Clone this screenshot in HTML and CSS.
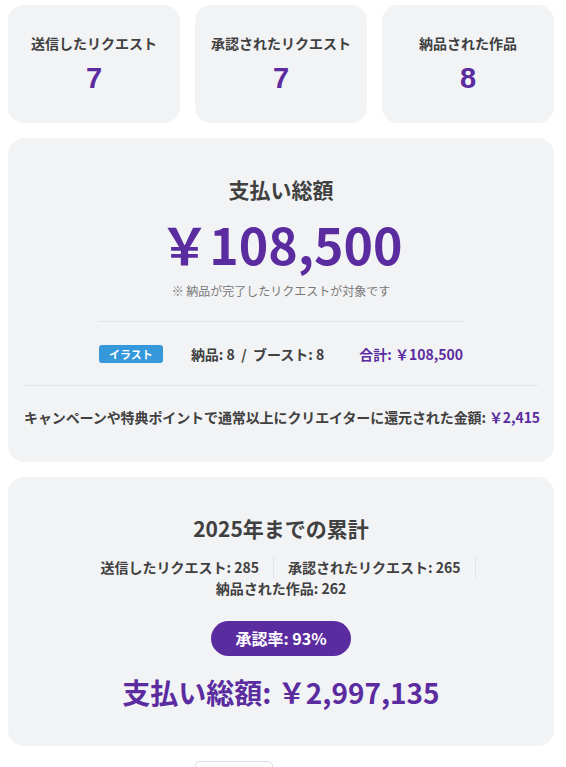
FILE: index.html
```html
<!DOCTYPE html>
<html lang="ja">
<head>
<meta charset="utf-8">
<link rel="stylesheet" href="styles.css">
</head>
<body>
<div class="page">
  <div class="stats">
    <div class="stat-card">
      <div class="stat-label">送信したリクエスト</div>
      <div class="stat-num">7</div>
    </div>
    <div class="stat-card">
      <div class="stat-label">承認されたリクエスト</div>
      <div class="stat-num">7</div>
    </div>
    <div class="stat-card">
      <div class="stat-label">納品された作品</div>
      <div class="stat-num">8</div>
    </div>
  </div>

  <div class="card total-card">
    <div class="card-title">支払い総額</div>
    <div class="big-amount">￥108,500</div>
    <div class="note">※ 納品が完了したリクエストが対象です</div>
    <div class="breakdown">
      <div class="breakdown-row">
        <span class="tag">イラスト</span>
        <span class="counts">納品: 8 &nbsp;/&nbsp; ブースト: 8</span>
        <span class="subtotal">合計: ￥108,500</span>
      </div>
    </div>
    <div class="bonus">キャンペーンや特典ポイントで通常以上にクリエイターに還元された金額: <span class="purple">￥2,415</span></div>
  </div>

  <div class="card summary-card">
    <div class="card-title">2025年までの累計</div>
    <div class="summary-stats">
      <span class="summary-item">送信したリクエスト: 285</span>
      <span class="summary-item">承認されたリクエスト: 265</span>
      <span class="summary-item last">納品された作品: 262</span>
    </div>
    <div class="rate">承認率: 93%</div>
    <div class="summary-total">支払い総額: ￥2,997,135</div>
  </div>

  <div class="more-row"><span class="more-btn"></span></div>
</div>
</body>
</html>
```

FILE: styles.css
```css
html, body {
  margin: 0;
  padding: 0;
  background: #ffffff;
}
body {
  padding: 5px 12px 0 8px;
  font-family: "Noto Sans CJK JP", "Noto Sans", sans-serif;
  color: #404040;
}
.page {
  width: 546px;
  display: flex;
  flex-direction: column;
  gap: 15px;
}
.stats {
  display: grid;
  grid-template-columns: repeat(3, 1fr);
  gap: 15px;
}
.stat-card {
  background: #f2f3f5;
  border-radius: 16px;
  height: 118px;
  display: flex;
  flex-direction: column;
  align-items: center;
  justify-content: center;
  gap: 8px;
}
.stat-label {
  font-size: 14px;
  font-weight: 700;
  color: #404040;
  line-height: 20px;
}
.stat-num {
  font-family: "Liberation Sans", Arial, sans-serif;
  font-size: 29px;
  font-weight: 700;
  color: #5b2ca0;
  line-height: 34px;
}
.card {
  background: #f2f3f5;
  border-radius: 16px;
  padding: 0 16px;
  display: flex;
  flex-direction: column;
  align-items: center;
}
.total-card {
  padding-top: 36px;
  padding-bottom: 35px;
}
.card-title {
  font-size: 21px;
  font-weight: 700;
  color: #404040;
  line-height: 30px;
}
.big-amount {
  font-size: 50px;
  font-weight: 700;
  color: #5b2ca0;
  line-height: 60px;
  margin-top: 9px;
}
.note {
  font-size: 12px;
  color: #777777;
  line-height: 18px;
  margin-top: 9px;
}
.breakdown {
  width: 366px;
  border-top: 1px solid #e3e4e8;
  margin-top: 21px;
  padding: 22px 0 21px;
}
.breakdown-row {
  display: flex;
  align-items: center;
  justify-content: center;
  font-size: 14px;
  font-weight: 700;
  line-height: 20px;
}
.tag {
  background: #3498db;
  color: #ffffff;
  font-size: 11px;
  font-weight: 700;
  width: 64px;
  height: 18px;
  line-height: 18px;
  text-align: center;
  border-radius: 3px;
}
.counts {
  color: #404040;
  margin-left: 28px;
}
.subtotal {
  color: #5b2ca0;
  margin-left: 35px;
}
.bonus {
  align-self: stretch;
  border-top: 1px solid #e3e4e8;
  padding-top: 21px;
  text-align: center;
  font-size: 14px;
  font-weight: 700;
  line-height: 20px;
  color: #404040;
  letter-spacing: -0.1px;
  white-space: nowrap;
}
.purple {
  color: #5b2ca0;
}
.summary-card {
  padding-top: 36px;
  padding-bottom: 34px;
}
.summary-stats {
  margin-top: 14px;
  width: 420px;
  display: flex;
  flex-wrap: wrap;
  justify-content: center;
  font-size: 14px;
  font-weight: 700;
  line-height: 21px;
  color: #404040;
}
.summary-item {
  padding: 0 14px;
  border-right: 1px solid #e3e4e8;
}
.summary-item.last {
  border-right: none;
}
.rate {
  margin-top: 22px;
  background: #5b2ca0;
  color: #ffffff;
  font-size: 16px;
  font-weight: 700;
  border-radius: 18px;
  height: 35px;
  line-height: 35px;
  padding: 0 24px;
}
.summary-total {
  margin-top: 16px;
  font-size: 28px;
  font-weight: 700;
  color: #5b2ca0;
  line-height: 40px;
}
.more-row {
  display: flex;
  padding-left: 187px;
}
.more-btn {
  width: 76px;
  height: 30px;
  border: 1px solid #dcdde0;
  border-radius: 5px;
  background: #fff;
}
```
